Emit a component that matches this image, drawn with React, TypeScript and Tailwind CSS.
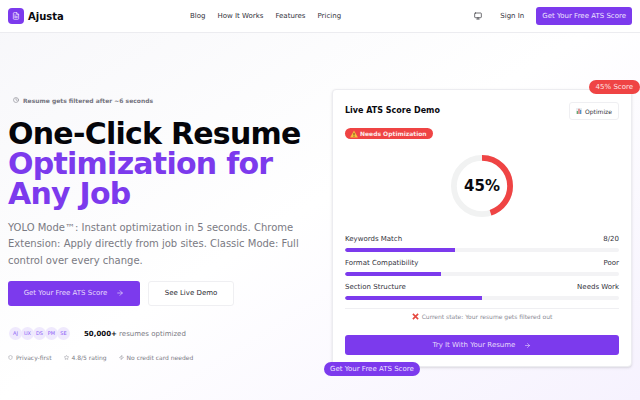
import { ArrowRight, Clock, FileText, Monitor, Shield, Star, Zap } from 'lucide-react';

const metrics = [
  { label: 'Keywords Match', value: '8/20', bar: 'w-[40%]' },
  { label: 'Format Compatibility', value: 'Poor', bar: 'w-[35%]' },
  { label: 'Section Structure', value: 'Needs Work', bar: 'w-[50%]' },
];

function Nav() {
  return (
    <header className="h-[33px] bg-white border-b border-[#ececf0] flex items-center pl-2 pr-2">
      <div className="flex items-center gap-1 w-[182px]">
        <div className="w-4 h-4 rounded-[4px] bg-[#7c3aed] flex items-center justify-center">
          <FileText size={8} className="text-white" />
        </div>
        <span className="text-[10px] font-bold text-[#0a0a0f]">Ajusta</span>
      </div>
      <nav className="flex items-center gap-3 text-[7px] text-[#33333c]">
        <a>Blog</a>
        <a>How It Works</a>
        <a>Features</a>
        <a>Pricing</a>
      </nav>
      <div className="flex items-center ml-auto">
        <Monitor size={8} className="text-[#2a2a30] mr-[18px]" />
        <span className="text-[7px] text-[#33333c] mr-3">Sign In</span>
        <button className="h-[18px] px-[6px] rounded-[3px] bg-[#7c3aed] text-[7px] text-[#ece4fd]">Get Your Free ATS Score</button>
      </div>
    </header>
  );
}

function Hero() {
  return (
    <section className="w-[310px] flex flex-col items-start pt-[62px]">
      <div className="flex items-center gap-1 pl-[5px] h-[10px] text-[6px] font-semibold text-[#75757f]">
        <Clock size={6} />
        <span>Resume gets filtered after ~6 seconds</span>
      </div>
      <h1 className="mt-[14px] text-[30px] leading-[30px] font-bold tracking-tight text-[#05050a]">
        One-Click Resume
        <span className="block text-[#7c3aed]">Optimization for</span>
        <span className="block text-[#7c3aed]">Any Job</span>
      </h1>
      <p className="mt-[11px] text-[10px] leading-[16.25px] text-[#7a7a83] w-[300px]">
        YOLO Mode™: Instant optimization in 5 seconds. Chrome Extension: Apply directly from job sites. Classic Mode: Full control over every change.
      </p>
      <div className="mt-3 flex gap-2">
        <button className="w-[132px] h-[25px] rounded-[3px] bg-[#7c3aed] text-[7px] text-[#e6dbfb] flex items-center justify-center gap-[9px]">
          Get Your Free ATS Score <ArrowRight size={8} />
        </button>
        <button className="w-[86px] h-[25px] rounded-[3px] bg-white border border-[#efeff2] text-[7px] font-medium text-[#2a2a30]">
          See Live Demo
        </button>
      </div>
      <div className="mt-[21px] flex items-center gap-[14px] h-[14px] pl-[1px]">
        <div className="flex -space-x-[1px]">
          {['AJ', 'UX', 'DS', 'PM', 'SE'].map((t) => (
            <div key={t} className="w-[13px] h-[13px] rounded-full bg-[#efe9fd] flex items-center justify-center text-[5px] text-[#8b5cf6]">
              {t}
            </div>
          ))}
        </div>
        <p className="text-[7px] text-[#7a7a83]">
          <span className="font-bold text-[#0a0a0f]">50,000+</span> resumes optimized
        </p>
      </div>
      <div className="mt-[12px] flex items-center gap-3 text-[6px] text-[#7b7b85]">
        <span className="flex items-center gap-[3px]"><Shield size={5} />Privacy-first</span>
        <span className="flex items-center gap-[3px]"><Star size={5} />4.8/5 rating</span>
        <span className="flex items-center gap-[3px]"><Zap size={5} />No credit card needed</span>
      </div>
    </section>
  );
}

function ScoreRing() {
  return (
    <div className="relative w-[62px] h-[62px] mx-auto">
      <svg viewBox="0 0 64 64" className="w-[62px] h-[62px] -rotate-90">
        <circle cx="32" cy="32" r="29" fill="none" stroke="#f1f2f2" strokeWidth="6" />
        <circle cx="32" cy="32" r="29" fill="none" stroke="#ef4444" strokeWidth="6" strokeDasharray="82 182.2" />
      </svg>
      <div className="absolute inset-0 flex items-center justify-center text-[15px] font-bold text-[#0a0a0f]">45%</div>
    </div>
  );
}

function DemoCard() {
  return (
    <section className="relative w-[300px] h-[278px] mt-[56px] bg-white rounded-[4px] border border-[#ececf0] shadow-sm px-3 pt-3">
      <span className="absolute -top-[10px] -right-[9px] h-[14px] px-[7px] rounded-full bg-[#ef4444] text-[7px] text-[#fde4e4] flex items-center">45% Score</span>
      <div className="flex items-center justify-between h-[18px]">
        <h2 className="text-[8px] font-bold text-[#0a0a0f]">Live ATS Score Demo</h2>
        <button className="w-[50px] h-[18px] rounded-[3px] border border-[#efeff2] text-[6px] text-[#33333c] flex items-center justify-center gap-[3px]">
          <svg viewBox="0 0 8 8" className="w-[6px] h-[6px]">
            <rect width="8" height="8" fill="#e9eef2" />
            <rect x="1" y="4" width="1.6" height="4" fill="#5fa86a" />
            <rect x="3.2" y="1" width="1.6" height="7" fill="#d9655f" />
            <rect x="5.4" y="2.5" width="1.6" height="5.5" fill="#4a8fd0" />
          </svg>
          Optimize
        </button>
      </div>
      <div className="mt-[8px] flex w-fit items-center gap-[2px] h-[11px] pl-[5px] pr-[6px] rounded-full bg-[#ef4444] text-[6px] font-bold text-[#fdeaea]">
        <svg viewBox="0 0 8 8" className="w-2 h-2"><path d="M4 .4 7.9 7.6H.1z" fill="#f8c03e" /><rect x="3.6" y="2.8" width=".8" height="2.6" fill="#4a3410" /><rect x="3.6" y="5.9" width=".8" height=".8" fill="#4a3410" /></svg>
        Needs Optimization
      </div>
      <div className="mt-4"><ScoreRing /></div>
      <div className="mt-[17px] flex flex-col gap-[6px]">
        {metrics.map((m) => (
          <div key={m.label}>
            <div className="flex justify-between h-[10px] leading-[10px] text-[7px] text-[#33333c]">
              <span>{m.label}</span>
              <span>{m.value}</span>
            </div>
            <div className="mt-[4px] h-1 rounded-full bg-[#f3f3f5] overflow-hidden">
              <div className={`h-full bg-[#7c3aed] rounded-l-full ${m.bar}`} />
            </div>
          </div>
        ))}
      </div>
      <div className="mt-[8px] border-t border-[#efeff2] pt-[3px] flex items-center justify-center gap-[3px] text-[6px] text-[#8b8b95] h-[12px]">
        <svg viewBox="0 0 8 8" className="w-[7px] h-[7px]"><path d="M1 1 7 7M7 1 1 7" stroke="#e5483f" strokeWidth="1.8" /></svg>
        Current state: Your resume gets filtered out
      </div>
      <button className="mt-[15px] w-full h-5 rounded-[3px] bg-[#7c3aed] text-[7px] text-[#e6dbfb] flex items-center justify-center gap-[9px]">
        Try It With Your Resume <ArrowRight size={7} />
      </button>
      <span className="absolute -bottom-[10px] -left-[9px] h-[14px] px-[6px] rounded-full bg-[#7c3aed] text-[7px] text-[#ece4fd] flex items-center">Get Your Free ATS Score</span>
    </section>
  );
}

export default function App() {
  return (
    <div className="w-[640px] h-[400px] overflow-hidden font-['DejaVu_Sans',sans-serif] bg-gradient-to-br from-[#f7f7fa] via-white to-[#f6f2fe]">
      <Nav />
      <main className="flex items-start justify-between pl-2 pr-2">
        <Hero />
        <DemoCard />
      </main>
    </div>
  );
}
